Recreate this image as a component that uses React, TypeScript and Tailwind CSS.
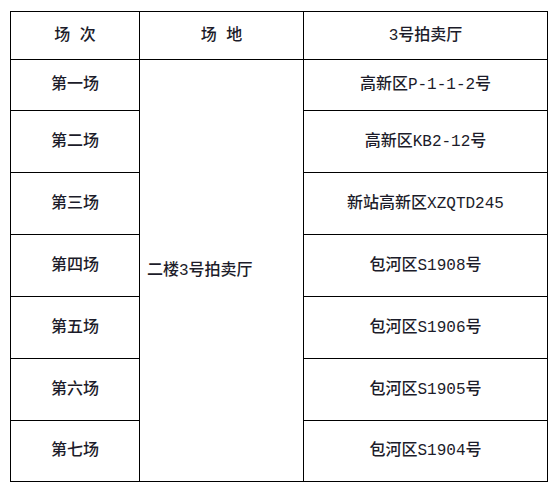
import React from "react";

const rows = [
  { a: "第一场", c: "高新区P-1-1-2号" },
  { a: "第二场", c: "高新区KB2-12号" },
  { a: "第三场", c: "新站高新区XZQTD245" },
  { a: "第四场", c: "包河区S1908号" },
  { a: "第五场", c: "包河区S1906号" },
  { a: "第六场", c: "包河区S1905号" },
  { a: "第七场", c: "包河区S1904号" },
];

export default function App() {
  return (
    <div className="w-[558px] h-[491px] bg-white pl-[10px] pt-[11px]">
      <div
        className="grid w-[538px] gap-px bg-black p-px text-[16px] font-medium text-[#1c1c2a] grid-cols-[128px_163px_243px] grid-rows-[47px_50px_61px_61px_61px_61px_61px_60px]"
        style={{ fontFamily: '"Liberation Mono", "Noto Sans CJK SC", monospace' }}
      >
        <div className="bg-white flex items-center justify-center">场 次</div>
        <div className="bg-white flex items-center justify-center">场 地</div>
        <div className="bg-white flex items-center justify-center">3号拍卖厅</div>
        {rows.map((r, i) => (
          <React.Fragment key={i}>
            <div className="bg-white flex items-center justify-center col-start-1">{r.a}</div>
            {i === 0 && (
              <div className="bg-white flex items-center pl-[7px] col-start-2 row-start-2 row-span-7">
                二楼3号拍卖厅
              </div>
            )}
            <div className="bg-white flex items-center justify-center col-start-3">{r.c}</div>
          </React.Fragment>
        ))}
      </div>
    </div>
  );
}
